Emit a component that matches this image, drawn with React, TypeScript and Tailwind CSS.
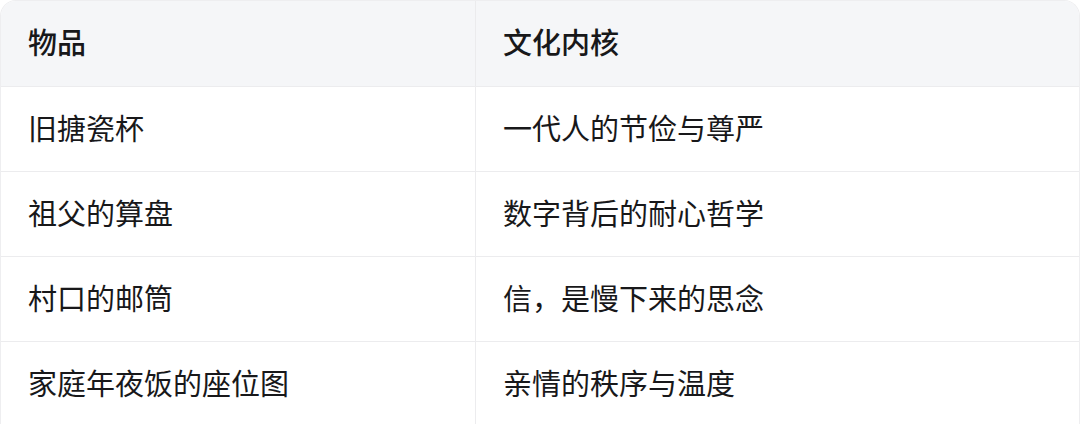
const rows = [
  ["旧搪瓷杯", "一代人的节俭与尊严"],
  ["祖父的算盘", "数字背后的耐心哲学"],
  ["村口的邮筒", "信，是慢下来的思念"],
  ["家庭年夜饭的座位图", "亲情的秩序与温度"],
];

export default function App() {
  return (
    <div
      className="h-[424px] w-[1080px] overflow-hidden bg-white text-[#18181a]"
      style={{ fontFamily: '"Noto Sans CJK SC", "Noto Sans", sans-serif' }}
    >
      <div className="overflow-hidden rounded-t-[16px] border border-b-0 border-[#eeeef0]">
        <div className="grid h-[85px] grid-cols-[475px_1fr] bg-[#f5f6f8] text-[29px] font-medium">
          <div className="flex items-center border-r border-[#ebebed] pb-[4px] pl-[27px]">物品</div>
          <div className="flex items-center pb-[4px] pl-[27px]">文化内核</div>
        </div>
        {rows.map(([item, core]) => (
          <div
            key={item}
            className="grid h-[85px] grid-cols-[475px_1fr] border-t border-[#ececee] text-[29px]"
          >
            <div className="flex items-center border-r border-[#ececee] pb-[2px] pl-[27px]">{item}</div>
            <div className="flex items-center pb-[2px] pl-[27px]">{core}</div>
          </div>
        ))}
      </div>
    </div>
  );
}
